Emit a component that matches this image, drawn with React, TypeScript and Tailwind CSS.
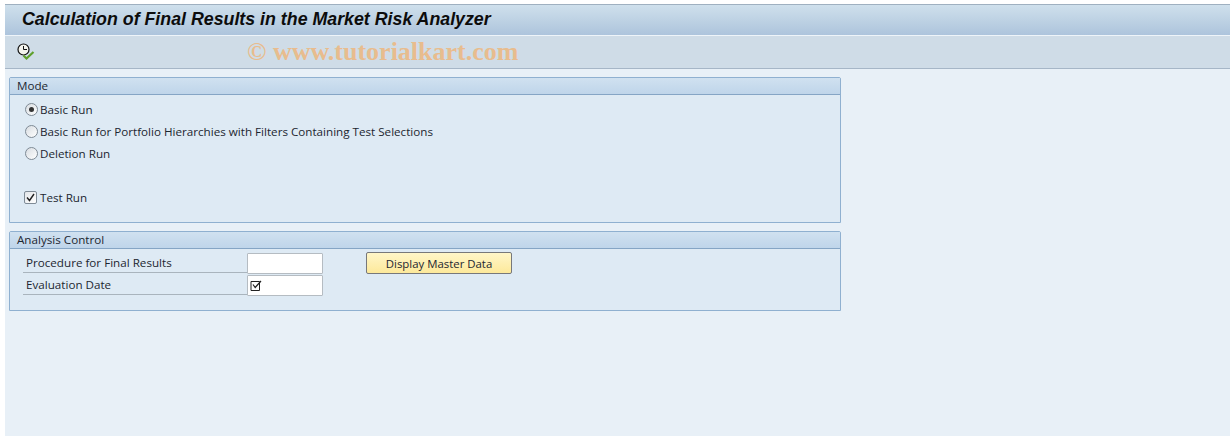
const font = "[font-family:'Open_Sans','Noto_Sans',sans-serif]";

const Radio = ({ checked = false }: { checked?: boolean }) => (
  <span className="flex h-[13px] w-[13px] items-center justify-center rounded-full border border-[#7f8a95] bg-gradient-to-br from-[#d8dde2] to-white">
    {checked && <span className="h-[5px] w-[5px] rounded-full bg-[#333333]"></span>}
  </span>
);

const RadioRow = ({ label, checked }: { label: string; checked?: boolean }) => (
  <div className="flex h-[22px] items-center pl-[15px]">
    <Radio checked={checked} />
    <span className="ml-[2px] pt-[2px] text-[11.65px] whitespace-nowrap text-[#1c2630]">{label}</span>
  </div>
);

const Panel = ({
  title,
  className,
  children,
}: {
  title: string;
  className: string;
  children: React.ReactNode;
}) => (
  <section className={`w-[832px] rounded-t-[2px] border border-[#8fb0d0] bg-[#deeaf4] ${className}`}>
    <div className="flex h-[17px] items-center border-b border-[#85a5c5] bg-gradient-to-b from-[#d0e1f0] to-[#bfd5ea] pl-[7px] text-[11.65px] text-[#1c2630]">
      {title}
    </div>
    {children}
  </section>
);

const FieldRow = ({ label, children }: { label: string; children?: React.ReactNode }) => (
  <div className="flex h-[22px] w-[300px] items-start">
    <div className="flex h-[21px] w-[224px] items-center border-b border-[#a9b4bd] pt-[2px] pl-[3px] text-[11.65px] text-[#1c2630]">
      {label}
    </div>
    <div className="mt-[1px] flex h-[21px] w-[76px] items-center rounded-[1px] border border-[#b5bcc2] bg-white pl-[2px]">
      {children}
    </div>
  </div>
);

export default function App() {
  return (
    <div className={`h-[436px] w-[1230px] overflow-hidden bg-white pt-[4px] pl-[5px] ${font}`}>
      <div className="h-[432px] bg-[#e8f0f7]">
        <header className="flex h-[32px] items-center border-t border-[#9fb0c0] border-b border-b-[#eef4f9] bg-gradient-to-b from-[#cfe0ec] to-[#adc4dc] pb-[2px] pl-[17px]">
          <h1 className="font-['Liberation_Sans',sans-serif] text-[17.8px] font-bold whitespace-nowrap text-[#0c0c0c] italic">
            Calculation of Final Results in the Market Risk Analyzer
          </h1>
        </header>
        <div className="flex h-[33px] items-center border-b border-[#a6b6c7] bg-[#cfdce7] pl-[12px]">
          <svg width="18" height="18" viewBox="0 0 18 18">
            <circle cx="6.5" cy="6.5" r="5.5" fill="#f4f4ee" stroke="#111" strokeWidth="1.2" />
            <path d="M6.5 3V6.5H10" fill="none" stroke="#111" strokeWidth="1" />
            <path d="M6.5 12.5l3 3L16.5 9" fill="none" stroke="#5fa02c" strokeWidth="2.2" />
          </svg>
          <span className="mb-[2px] ml-[212px] font-['Liberation_Serif',serif] text-[26px] font-bold whitespace-nowrap text-[#e8bc8e]">
            © www.tutorialkart.com
          </span>
        </div>
        <div className="flex flex-col gap-[8px] pt-[8px] pl-[4px]">
          <Panel title="Mode" className="h-[146px]">
            <div className="pt-[3px]">
              <RadioRow label="Basic Run" checked />
              <RadioRow label="Basic Run for Portfolio Hierarchies with Filters Containing Test Selections" />
              <RadioRow label="Deletion Run" />
              <div className="mt-[22px] flex h-[22px] items-center pl-[14px]">
                <span className="flex h-[13px] w-[13px] items-center justify-center rounded-[2px] border border-[#7f8b96] bg-gradient-to-br from-[#e3e6e9] to-white">
                  <svg width="9" height="9" viewBox="0 0 9 9">
                    <path d="M1 4.5l2.5 3L8 1" fill="none" stroke="#222" strokeWidth="1.4" />
                  </svg>
                </span>
                <span className="ml-[3px] pt-[2px] text-[11.65px] text-[#1c2630]">Test Run</span>
              </div>
            </div>
          </Panel>
          <Panel title="Analysis Control" className="h-[80px]">
            <div className="flex gap-[43px] pt-[3px] pl-[13px]">
              <div>
                <FieldRow label="Procedure for Final Results" />
                <FieldRow label="Evaluation Date">
                  <svg width="12" height="12" viewBox="0 0 12 12">
                    <path d="M1 1.5h8.5v9H1z" fill="none" stroke="#222" strokeWidth="1" />
                    <path d="M3 4.5l2.2 3L11 1" fill="none" stroke="#222" strokeWidth="1.2" />
                  </svg>
                </FieldRow>
              </div>
              <button className="h-[22px] w-[146px] rounded-[2px] border border-[#77787a] bg-gradient-to-b from-[#fff6c8] to-[#fde99a] pt-[1px] text-[11.4px] text-[#1c2630]">
                Display Master Data
              </button>
            </div>
          </Panel>
        </div>
      </div>
    </div>
  );
}
